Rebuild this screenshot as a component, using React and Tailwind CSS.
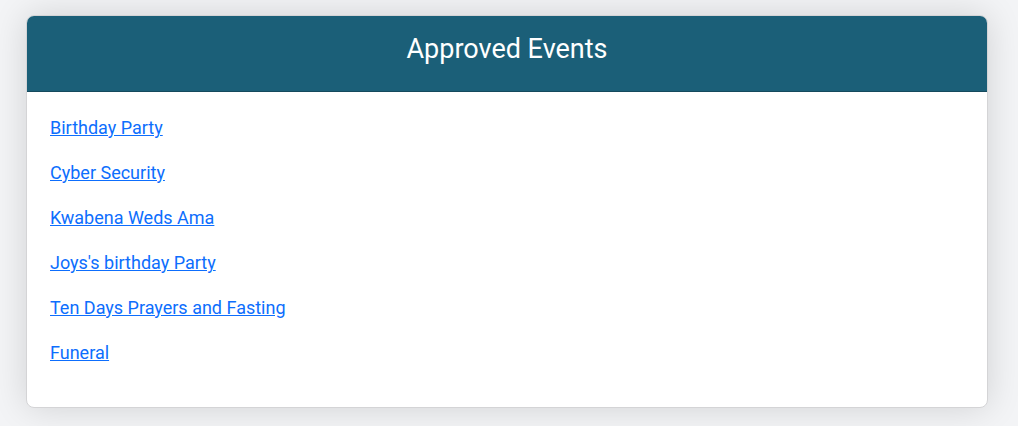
export default function App() {
  const events = [
    "Birthday Party",
    "Cyber Security",
    "Kwabena Weds Ama",
    "Joys's birthday Party",
    "Ten Days Prayers and Fasting",
    "Funeral",
  ];
  return (
    <div className="min-h-[426px] bg-[#f3f4f6] pt-[15px] pb-[19px] pl-[26px]" style={{ fontFamily: "Roboto, 'Liberation Sans', sans-serif" }}>
      <div className="w-[962px] rounded-[8px] border border-[#d4d4d6] bg-white overflow-hidden shadow-[0_0_35px_rgba(0,0,0,0.14)]">
        <div className="h-[76px] bg-[#1b5f78] border-b border-[#154a5d] pt-[17px]">
          <h2 className="text-[27px] leading-[32px] text-white font-normal text-center">Approved Events</h2>
        </div>
        <ul className="flex flex-col gap-[18px] pt-[22px] pb-[41px] pl-[23px]">
          {events.map((e) => (
            <li key={e} className="text-[18px] leading-[27px]">
              <a href="#" className="text-[#0d6efd] underline">{e}</a>
            </li>
          ))}
        </ul>
      </div>
    </div>
  );
}
